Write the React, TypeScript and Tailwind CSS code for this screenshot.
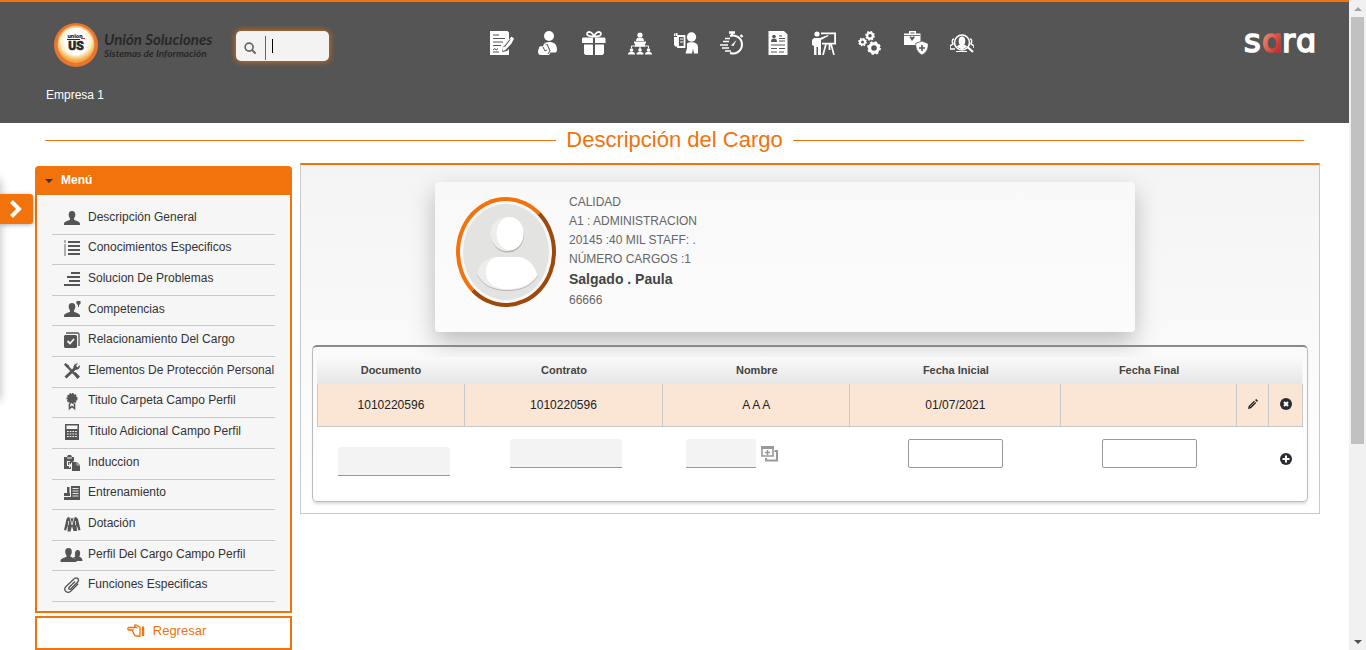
import React from "react";

type IconProps = { children: React.ReactNode; box?: number; className?: string };

function Icon({ children, box = 24, className = "size-6" }: IconProps) {
  return (
    <svg viewBox={`0 0 ${box} ${box}`} className={className} fill="currentColor" aria-hidden="true">
      {children}
    </svg>
  );
}

const GEAR = (cx: number, cy: number, r: number, hole: number) => (
  <g>
    <circle cx={cx} cy={cy} r={(r + hole) / 2} fill="none" stroke="currentColor" strokeWidth={r - hole} />
    <circle cx={cx} cy={cy} r={r} fill="none" stroke="currentColor" strokeWidth="1.800" strokeDasharray={`${(r * 6.283) / 16}`} />
  </g>
);

const modules: { name: string; art: React.ReactNode }[] = [
  {
    name: "Contratos",
    art: (
      <>
        <path d="M0 0h17.500l1.500 1.500V9l-6 7-1 5 5-1 2-2v6H0z" />
        <path d="M3 4h6M3 7.500h12M3 11h10M3 14.500h8" stroke="#555" strokeWidth="1.200" />
        <path d="M3 19l2-1.500 1 1.500 2-1.500M3 21h6" stroke="#555" fill="none" />
        <path d="M21.500 5.500l2.500 2-2.500 5-6 6.500-3 1 .6-3.500z" />
        <path d="M20 8.500l-5.500 7.500" stroke="#555" strokeWidth="1" />
      </>
    ),
  },
  {
    name: "Nómina",
    art: (
      <>
        <circle cx="13" cy="5" r="5" />
        <path d="M8 12l5-1c5 0 8 2 8 8 0 2-1 2.500-3 2.500h-3l-4-8z" />
        <path d="M3 17c0-2 2-2 4-1.500l1-3 3 1.500 4 7-2 3H5c-2 0-3-1-3-4z" />
        <path d="M7 16l2 4 2-1M11 13l3 7-2 3" stroke="#555" fill="none" strokeWidth="1" />
      </>
    ),
  },
  {
    name: "Beneficios",
    art: (
      <>
        <path d="M1 6.500h10v5.500H0V7.500zM13 6.500h9.500l1 1V12H13zM2 13.500h9V24H3.500L2 22.500zM13 13.500h9v9L20.500 24H13z" />
        <path d="M12 5.500C9 5.500 5 5 5 3s2-2.500 4-1.500 3 4 3 4zm0 0c3 0 7-.5 7-2.500s-2-2.500-4-1.500-3 4-3 4z" fill="none" stroke="currentColor" strokeWidth="1.800" />
      </>
    ),
  },
  {
    name: "Organigrama",
    art: (
      <>
        <circle cx="12" cy="4" r="2.600" />
        <path d="M8 10c0-2.500 1.500-3.500 4-3.500s4 1 4 3.500zM6 10.500h12v2h-1v3H7v-3H6z" />
        <path d="M3.500 17v-2h17v2M12 14v4" fill="none" stroke="currentColor" />
        <circle cx="3.500" cy="19" r="1.800" />
        <circle cx="12" cy="19" r="1.800" />
        <circle cx="20.500" cy="19" r="1.800" />
        <path d="M0 23.500c0-2 1-2.800 3.500-2.800S7 21.500 7 23.500zM8.500 23.500c0-2 1-2.800 3.500-2.800s3.500.8 3.500 2.800zM17 23.500c0-2 1-2.800 3.500-2.800s3.500.8 3.500 2.800z" />
      </>
    ),
  },
  {
    name: "Selección",
    art: (
      <>
        <circle cx="17.500" cy="6" r="4.700" />
        <path d="M11.500 22.500l1.500-5v-5c1-1 2.500-1.300 4.500-1.300 4 0 6.500 1.500 6.500 5v6.300h-4l-1-5-1 5z" />
        <path d="M4 5h6.500v11H4z" fill="none" stroke="currentColor" strokeWidth="1.800" />
        <path d="M6 8h3M6 11h3" stroke="currentColor" />
        <path d="M0 6h3.500v9L2 16l-2-2zM0 2.500h1.500V5H0zM2 2h1.500v3H2z" />
      </>
    ),
  },
  {
    name: "Tiempos",
    art: (
      <>
        <path d="M10 5a9 9 0 1 1 0 17" fill="none" stroke="currentColor" strokeWidth="2" />
        <path d="M9 1.500h6M12 1v4M20.500 4l2 2" stroke="currentColor" strokeWidth="2.400" />
        <path d="M5 7.500h5M3 10.500h6M0 14h8M2 17h7M5 20h6" stroke="currentColor" strokeWidth="1.300" />
        <path d="M16.500 9l-3 6-2.500-.5z" />
      </>
    ),
  },
  {
    name: "Hoja de vida",
    art: (
      <>
        <path d="M2.500 0H18l3.500 3.500V24h-19z" />
        <circle cx="8" cy="5.500" r="1.800" fill="#555" />
        <path d="M5 11c0-3 1-3.500 3-3.500s3 .5 3 3.500z" fill="#555" />
        <path d="M13 5h3M13 7.500h6M13 10h6M5 14h14M5 17.500h6M13 17.500h6M5 21h6M13 21h5" stroke="#555" strokeWidth="1.200" />
      </>
    ),
  },
  {
    name: "Capacitación",
    art: (
      <>
        <circle cx="5" cy="3" r="2.600" />
        <path d="M2 7h6l8-3 .5 1L9 9v15H6v-8H4.500v8H2v-9L0 14V9zM9 1.500h15v12H10v-1.800h12.200V3.200H9z" />
        <path d="M14 13l-3 11M17.500 13v6M19 13l3 11" stroke="currentColor" strokeWidth="1.700" />
      </>
    ),
  },
  {
    name: "Procesos",
    art: (
      <>
        {GEAR(12, 4.800, 4, 1.800)}
        {GEAR(4.500, 11, 3.500, 1.500)}
        {GEAR(16, 17, 6, 2.800)}
      </>
    ),
  },
  {
    name: "Seguridad",
    art: (
      <>
        <path d="M5 2.500V0h7v2.500h4.500v8L12 12v2H0V2.500zM6.500 2.500h4V1.500h-4z" fillRule="evenodd" />
        <path d="M5.500 6l2.500 4 3-4-1.500-.8L8 6.500l-1.500-1.300z" fill="#555" />
        <path d="M0 4.500h16" stroke="#555" strokeWidth=".8" />
        <path d="M18 10l6.300 2.500c0 5-1.500 9-6.300 11.500-4.800-2.500-6.300-6.500-6.300-11.500z" stroke="#555" strokeWidth=".7" />
        <path d="M18 14v6M15 17h6" stroke="#555" strokeWidth="1.600" />
      </>
    ),
  },
  {
    name: "Búsqueda",
    art: (
      <>
        <circle cx="12" cy="11.500" r="7.500" fill="none" stroke="currentColor" strokeWidth="1.600" />
        <ellipse cx="12" cy="10" rx="3.300" ry="4.500" />
        <path d="M7 16c0-1.500 2-2.500 5-2.500s5 1 5 2.500l-5 2.500z" />
        <path d="M17.500 16l5.500 5" stroke="currentColor" strokeWidth="2" />
        <path d="M4 8c-2 0-2 3-1 5l-3 2v3h5M20 8c2 0 2 3 1 5l3 2v2" fill="none" stroke="currentColor" strokeWidth="1.500" />
        <path d="M6 20.500h11" stroke="currentColor" />
      </>
    ),
  },
];

const PERSON = "M8 1c2.300 0 3.500 1.600 3.300 4-.1 1.700-.8 2.600-1.300 3.400v1.400c1.500 1 6 1.600 6 4.200v1H0v-1c0-2.600 4.500-3.200 6-4.200V8.400C5.500 7.600 4.800 6.700 4.700 5 4.500 2.600 5.700 1 8 1z";

const menu: { label: string; art: React.ReactNode }[] = [
  { label: "Descripción General", art: <path d={PERSON} /> },
  {
    label: "Conocimientos Especificos",
    art: (
      <>
        <path d="M4 1h12v2H4zM4 5h12v2H4zM4 9h12v2H4zM4 13h12v2H4z" />
        <path d="M1 0v3M0 5h2M0 7h2M0 9h2M0 11h2M0 13h2M0 15h2" stroke="currentColor" strokeWidth=".9" />
      </>
    ),
  },
  { label: "Solucion De Problemas", art: <path d="M7 1h9v2H7zM3 5h13v2H3zM5 9h11v2H5zM0 13h16v2H0z" /> },
  {
    label: "Competencias",
    art: (
      <>
        <path d={PERSON} />
        <path d="M12.500-1h4v3l-1.500 1v2h-1V3l-1.500-1z" />
      </>
    ),
  },
  {
    label: "Relacionamiento Del Cargo",
    art: (
      <>
        <path d="M1 3h11l1 1v11l-1 1H1l-1-1V4z" />
        <path d="M2 1h12l1 1v12" fill="none" stroke="currentColor" strokeWidth="1.300" />
        <path d="M3.500 9l2.500 2.500 4-4.500" fill="none" stroke="#f6f6f6" strokeWidth="1.800" />
      </>
    ),
  },
  {
    label: "Elementos De Protección Personal",
    art: (
      <>
        <path d="M1.500 1.500l12.500 13" stroke="currentColor" strokeWidth="2.400" />
        <path d="M0 1.500L1.500 0l4 3-2 2zM9.500 10.500l2-1.500 4.500 4.500-2.500 2.500z" />
        <path d="M1.500 14.500L11 5.500" stroke="currentColor" strokeWidth="3" />
        <path d="M9.500 5.500C9 2.500 11 0 14 .5L12 2.700 13.500 4.300 15.700 2c.8 3-1.700 5.300-4.700 4.700z" />
      </>
    ),
  },
  {
    label: "Titulo Carpeta Campo Perfil",
    art: (
      <>
        <circle cx="8" cy="5.500" r="4.500" />
        <circle cx="8" cy="5.500" r="4.700" fill="none" stroke="currentColor" strokeWidth="1.600" strokeDasharray="1.900 .8" />
        <path d="M5.500 10.500v5l2.500-2 2.500 2v-5" fill="none" stroke="currentColor" strokeWidth="1.600" />
      </>
    ),
  },
  {
    label: "Titulo Adicional Campo Perfil",
    art: (
      <>
        <path d="M1 0h14v16H1zM2.500 1.500v3.500h11V1.500z" fillRule="evenodd" />
        <path d="M3 7.500h10M3 10h10M3 12.500h10" stroke="#f6f6f6" strokeWidth="1.200" strokeDasharray="1.700 1" />
      </>
    ),
  },
  {
    label: "Induccion",
    art: (
      <>
        <path d="M0 2h3l1-2h3l1 2h2v4L7 8v6H0z" />
        <path d="M3 3h5M6 6.500H3.500v4H7M5 8.500l2 2-2 2" stroke="#f6f6f6" fill="none" strokeWidth="1.100" />
        <path d="M8 7h5l3 3v6H8z" />
        <path d="M13 7v3h3" stroke="#f6f6f6" fill="none" strokeWidth=".7" />
      </>
    ),
  },
  {
    label: "Entrenamiento",
    art: (
      <>
        <path d="M7 1h9v14H7zM3 2h2.500v8H3zM0 8h6v3H0zM0 12h7v3H0z" />
        <path d="M8.500 3.500h6M8.500 6h6M8.500 8.500h6M8.500 11h6" stroke="#f6f6f6" strokeWidth=".9" />
      </>
    ),
  },
  {
    label: "Dotación",
    art: (
      <>
        <path d="M4 1l4 1.500L12 1l2 2 2.500 11-2 .5L12.500 9l.5 6H9.500L8 10l-1.500 5.500H3.500L4 9l-2 5.500-2-.5L2.500 3z" />
        <path d="M6 2l2 7 2-7M4.500 5v4M11.500 5v4" stroke="#f6f6f6" fill="none" strokeWidth=".8" />
      </>
    ),
  },
  {
    label: "Perfil Del Cargo Campo Perfil",
    art: (
      <>
        <path d={PERSON} transform="translate(-3.500 0)" />
        <path d="M13.500 3c2.500 0 3 2.300 2.500 5l-.8 1.600c1 .8 3.300 1.200 3.300 4.400h-6.200c-.3-2-2-2.600-3-3.200.6-.5 1.800-.7 2-1.200C10.700 8 10.500 3 13.500 3z" />
      </>
    ),
  },
  {
    label: "Funciones Especificas",
    art: (
      <path
        d="M11 4.500L5 10.500c-1 1.200.5 2.500 1.700 1.500l7-7c2.200-2.500-1-5.500-3.500-3.300L2 9.500c-3.300 3.500 1.200 7.800 4.700 4.700l7.500-7.500"
        fill="none"
        stroke="currentColor"
        strokeWidth="1.300"
      />
    ),
  },
];

function BrandLogo() {
  return (
    <a href="#inicio" className="flex w-[162px] items-center gap-[5px] text-[#292827]">
      <svg viewBox="0 0 46 46" className="size-[46px] shrink-0" aria-hidden="true">
        <defs>
          <radialGradient id="halo" cx="50%" cy="35%" r="60%">
            <stop offset="0.4" stopColor="#ffffff" />
            <stop offset="0.75" stopColor="#fdeec2" />
            <stop offset="1" stopColor="#f3a843" />
          </radialGradient>
        </defs>
        <circle cx="23" cy="23" r="22" fill="#e9762c" />
        <circle cx="23" cy="22" r="18.500" fill="#f6bd7b" />
        <circle cx="23" cy="23" r="17.500" fill="url(#halo)" />
        <circle cx="23" cy="21" r="12.500" fill="#fff" />
        <text x="22" y="16" textAnchor="middle" fontSize="6" fontWeight="900" fontFamily="Roboto, sans-serif" fill="#292827">union</text>
        <text x="23" y="28" textAnchor="middle" fontSize="12" fontWeight="900" fontFamily="Roboto, sans-serif" fill="#292827" stroke="#292827" strokeWidth=".6">US</text>
        <path d="M14 17.500h13" stroke="#292827" />
        <path d="M28 16.500h4" stroke="#d3382e" />
      </svg>
      <span className="flex flex-col font-['Lato',sans-serif] font-bold whitespace-nowrap italic">
        <span className="text-[15px] leading-4">Unión Soluciones</span>
        <span className="text-[10px] leading-3">Sistemas de Información</span>
      </span>
    </a>
  );
}

function SaraLogo() {
  return (
    <svg viewBox="0 0 78 45" className="h-[45px] w-[78px]" aria-hidden="true">
      <defs>
        <linearGradient id="ruby" x1="0" y1="0" x2="1" y2="1">
          <stop offset="0.2" stopColor="#f08a72" />
          <stop offset="0.7" stopColor="#cf3a33" />
          <stop offset="1" stopColor="#a31f1f" />
        </linearGradient>
      </defs>
      <g fontFamily="DejaVu Sans, sans-serif" fontSize="32" fill="#fff" stroke="#fff" strokeWidth="1.600">
        <text x="1" y="30">s</text>
        <text x="19" y="30" fill="url(#ruby)" stroke="url(#ruby)">ɑ</text>
        <text x="39" y="30">r</text>
        <text x="53" y="30">ɑ</text>
      </g>
    </svg>
  );
}

function Header() {
  return (
    <header className="h-[123px] border-t-2 border-[#f2720c] bg-[#555]">
      <div className="flex pt-5 pr-[28px] pl-[53px]">
        <div className="flex w-[437px] items-start gap-[21px]">
          <BrandLogo />
          <div className="mt-[9px] flex h-[30px] w-[93px] items-center rounded-[5px] bg-[#f3f3f3] pl-2 shadow-[0_0_6px_#f2720c]">
            <svg viewBox="0 0 14 14" className="mt-1 size-[13px] shrink-0" fill="none" stroke="#666" strokeWidth="1.800" aria-hidden="true">
              <circle cx="5.500" cy="5.500" r="4.300" />
              <path d="M8.500 8.500l4 4" strokeWidth="2.200" />
            </svg>
            <span className="mt-1 ml-2 h-6 w-px shrink-0 bg-[#666]" />
            <span className="ml-1.5 h-3.5 w-px shrink-0 bg-black" />
            <input type="search" aria-label="Buscar" className="w-full min-w-0 bg-transparent text-[12px] outline-none" />
          </div>
        </div>
        <nav className="mt-[9px] flex h-6 gap-[22px] text-white">
          {modules.map((m) => (
            <button key={m.name} type="button" aria-label={m.name} className="size-6">
              <Icon>{m.art}</Icon>
            </button>
          ))}
        </nav>
        <a href="#sara" className="ml-auto" aria-label="Sara">
          <SaraLogo />
        </a>
      </div>
      <p className="pt-[19px] pl-[46px] text-[12px] leading-4 text-white">Empresa 1</p>
    </header>
  );
}

function Sidebar() {
  return (
    <aside className="mt-[3px] flex w-[257px] shrink-0 flex-col gap-[3px]">
      <section className="rounded-t-[4px] border-2 border-[#f2720c] bg-[#f6f6f6]">
        <h2 className="bg-[#f2720c]">
          <button type="button" className="flex h-[27px] w-full items-center gap-2 pb-1 pl-2 text-[12px] font-bold text-white">
            <svg viewBox="0 0 8 4" className="mt-0.5 h-1 w-2" aria-hidden="true">
              <path d="M0 0h8L4 4z" fill="#333" />
            </svg>
            Menú
          </button>
        </h2>
        <ul className="grid h-[416px] auto-rows-fr py-[9px] pr-[15px] pl-[15px]">
          {menu.map((item) => (
            <li key={item.label} className="border-b border-[#c9c9c9]">
              <a href="#menu" className="flex h-full items-center gap-2 pb-1 pl-3 text-[12px] whitespace-nowrap text-[#333]">
                <span className="mt-0.5 shrink-0 text-[#555]">
                  <Icon box={16} className="size-4 overflow-visible">{item.art}</Icon>
                </span>
                {item.label}
              </a>
            </li>
          ))}
        </ul>
      </section>
      <a href="#regresar" className="flex items-center justify-center gap-2 border-2 border-[#f2720c] bg-white pt-[3px] pb-[7px] pl-1.5 text-[13px] leading-5 text-[#f2720c]">
        <svg viewBox="0 0 18 14" className="h-3.5 w-[18px]" fill="none" stroke="currentColor" strokeWidth="1.300" aria-hidden="true">
          <path d="M8 3.500H1.500C.5 4 .5 5.500 1.500 6H6c-1 1-.5 2 .5 2.300-.5 1 0 1.700.8 2 0 1 .5 1.700 1.700 1.700h4V3.500L9.500 1C8 .5 7 1.200 8 2.200l1.500 1.300z" />
          <path d="M16 2.500v9.500" strokeWidth="2.400" />
        </svg>
        Regresar
      </a>
    </aside>
  );
}

function ProfileCard() {
  return (
    <section className="mr-[184px] ml-auto flex h-[150px] w-[700px] gap-[13px] rounded-[4px] bg-white/40 pt-[15px] pl-[21px] shadow-[0_10px_24px_rgba(0,0,0,0.25)]">
      <div className="h-[110px] w-[100px] rounded-[50%] border-4 border-[#f2720c] border-r-[#9c4a0b] border-b-[#9c4a0b] bg-[#f7f7f7]">
        <svg viewBox="0 0 92 102" className="size-full" aria-hidden="true">
          <ellipse cx="46" cy="51" rx="43" ry="48" fill="#e3e3e1" />
          <path d="M17 74c6 11 16 16 30 16s24-4 31-15c-4-12-12-17-18-18H34c-8 1-15 7-17 17z" fill="#b9b7b6" />
          <path d="M17 73c6 11 16 16 30 16s24-4 31-15c-4-12-12-17-18-18H34c-8 1-15 7-17 17z" fill="#ededec" />
          <path d="M26 71c0-10 6-15 13-15h20c8 1 15 7 18 18-6 10-17 14-30 14-15 0-21-8-21-17z" fill="#fff" />
          <ellipse cx="47.500" cy="34.500" rx="16.500" ry="17" fill="#b9b7b6" />
          <ellipse cx="47" cy="33" rx="16.500" ry="17" fill="#ededec" />
          <ellipse cx="50" cy="32.500" rx="13.500" ry="16.500" fill="#fff" />
        </svg>
      </div>
      <div className="-mt-1 text-[12px] leading-[19px] text-[#666]">
        <p>CALIDAD</p>
        <p>A1 : ADMINISTRACION</p>
        <p>20145 :40 MIL STAFF: .</p>
        <p>NÚMERO CARGOS :1</p>
        <p className="pb-[2px] text-[14px] leading-5 font-bold text-[#444]">Salgado . Paula</p>
        <p>66666</p>
      </div>
    </section>
  );
}

const cellBorder = "border-r border-[#c9c9c9]";
const readOnlyField = "h-[29px] rounded-t-[3px] border-b border-[#999] bg-[#f3f3f3] outline-none";
const dateField = "h-[29px] w-[95px] rounded-[2px] border border-[#999] bg-white px-1 outline-none";

function PositionTable() {
  return (
    <div className="mx-[11px] mt-[13px] mb-[11px] rounded-[5px] border border-t-2 border-[#bbb] border-t-[#8a8a8a] px-1 pt-[10px] pb-1 shadow-[0_3px_3px_-1px_rgba(0,0,0,0.15)]">
      <table className="w-full table-fixed border-separate border-spacing-0 text-center text-[12px] text-[#222]">
        <colgroup>
          <col className="w-[15%]" />
          <col className="w-[20.100%]" />
          <col className="w-[19%]" />
          <col className="w-[21.400%]" />
          <col className="w-[17.800%]" />
          <col className="w-[3.300%]" />
          <col className="w-[3.400%]" />
        </colgroup>
        <thead>
          <tr className="h-[27px] bg-linear-to-b from-[#fafafa] to-[#e6e6e6] text-[11px] text-[#444]">
            <th scope="col">Documento</th>
            <th scope="col">Contrato</th>
            <th scope="col">Nombre</th>
            <th scope="col">Fecha Inicial</th>
            <th scope="col">Fecha Final</th>
            <td />
            <td />
          </tr>
        </thead>
        <tbody>
          <tr className="h-[43px] bg-[#fbe6d6] *:border-b *:border-[#c9c9c9]">
            <td className="border-r border-l">1010220596</td>
            <td className={cellBorder}>1010220596</td>
            <td className={cellBorder}>A A A</td>
            <td className={cellBorder}>01/07/2021</td>
            <td className={cellBorder} />
            <td className={cellBorder}>
              <button type="button" aria-label="Editar" className="block w-full pb-0.5">
                <svg viewBox="0 0 10 10" className="mx-auto size-2.5" aria-hidden="true">
                  <path d="M0 10l.7-3L6 1.800l2.200 2.200L3 9.300zM7 1l1.300-1L10 1.700 9 3z" fill="#222" />
                  <path d="M1.800 8L7 3" stroke="#fbe6d6" strokeWidth=".7" />
                </svg>
              </button>
            </td>
            <td className={cellBorder}>
              <button type="button" aria-label="Eliminar" className="block w-full pb-[3px]">
                <svg viewBox="0 0 12 12" className="mx-auto size-3" aria-hidden="true">
                  <circle cx="6" cy="6" r="6" fill="#2b2b33" />
                  <path d="M4 4l4 4M8 4L4 8" stroke="#fff" strokeWidth="2" />
                </svg>
              </button>
            </td>
          </tr>
          <tr className="h-[70px] bg-white align-top">
            <td className="pt-5 pl-1.5">
              <input aria-label="Documento" readOnly className={`${readOnlyField} w-28`} />
            </td>
            <td className="pt-3 pl-1">
              <input aria-label="Contrato" readOnly className={`${readOnlyField} w-28`} />
            </td>
            <td className="pt-3">
              <div className="flex items-center gap-[5px] pl-[23px]">
                <input aria-label="Nombre" readOnly className={`${readOnlyField} w-[70px]`} />
                <button type="button" aria-label="Buscar nombre">
                  <svg viewBox="0 0 17 16" className="h-4 w-[17px]" fill="none" stroke="#999" aria-hidden="true">
                    <path d="M1 1h11v9H1z" strokeWidth="1.600" />
                    <path d="M0 1.500h13" strokeWidth="3" />
                    <path d="M6.500 4v5M4 6.500h5" strokeWidth="1.500" />
                    <path d="M13.500 5H16v9.500H5V12" strokeWidth="2" />
                  </svg>
                </button>
              </div>
            </td>
            <td className="pt-3">
              <input aria-label="Fecha Inicial" className={dateField} />
            </td>
            <td className="pt-3">
              <input aria-label="Fecha Final" className={dateField} />
            </td>
            <td />
            <td className="pt-[26px]">
              <button type="button" aria-label="Agregar" className="block w-full">
                <svg viewBox="0 0 12 12" className="mx-auto size-3" aria-hidden="true">
                  <circle cx="6" cy="6" r="6" fill="#2b2b33" />
                  <path d="M6 2.500v7M2.500 6h7" stroke="#fff" strokeWidth="2" />
                </svg>
              </button>
            </td>
          </tr>
        </tbody>
      </table>
    </div>
  );
}

function Scrollbar() {
  return (
    <div className="sticky top-0 flex h-screen w-[17px] shrink-0 flex-col items-center bg-[#f1f1f1]" aria-hidden="true">
      <div className="flex h-[17px] items-center">
        <svg viewBox="0 0 8 4" className="h-1 w-2"><path d="M0 4h8L4 0z" fill="#a3a3a3" /></svg>
      </div>
      <div className="w-full flex-1 px-0.5">
        <div className="h-[69.300%] bg-[#c1c1c1]" />
      </div>
      <div className="flex h-[17px] items-center">
        <svg viewBox="0 0 8 4" className="h-1 w-2"><path d="M0 0h8L4 4z" fill="#505050" /></svg>
      </div>
    </div>
  );
}

export default function App() {
  return (
    <div className="flex bg-white font-['Liberation_Sans',Arial,sans-serif]">
      <div className="relative min-w-0 flex-1">
        <Header />
        <h1 className="mx-[45px] flex items-center gap-[10px] text-[22px] leading-[34px] text-[#f2720c] before:h-px before:flex-1 before:bg-[#f2720c] after:h-px after:flex-1 after:bg-[#f2720c]">
          Descripción del Cargo
        </h1>
        <div className="mt-[6px] flex items-start gap-2 pr-[29px] pl-[35px]">
          <Sidebar />
          <main className="min-w-0 flex-1 border border-t-2 border-[#c9c9c9] border-t-[#f2720c] bg-linear-to-b from-[#f4f4f4] to-white pt-[17px]">
            <ProfileCard />
            <PositionTable />
          </main>
        </div>
        <div className="absolute top-[180px] -left-2 h-[220px] w-2 shadow-[0_0_10px_rgba(0,0,0,0.3)]" />
        <button type="button" aria-label="Abrir panel" className="absolute top-[194px] left-0 flex h-[30px] w-[33px] items-center rounded-r-[3px] bg-[#f2720c] pl-2.5 shadow-[0_1px_4px_rgba(0,0,0,0.3)]">
          <svg viewBox="0 0 12 18" className="h-[18px] w-3" fill="none" stroke="#fff" strokeWidth="4" aria-hidden="true">
            <path d="M1.500 1.500L9 9l-7.500 7.500" />
          </svg>
        </button>
      </div>
      <Scrollbar />
    </div>
  );
}
